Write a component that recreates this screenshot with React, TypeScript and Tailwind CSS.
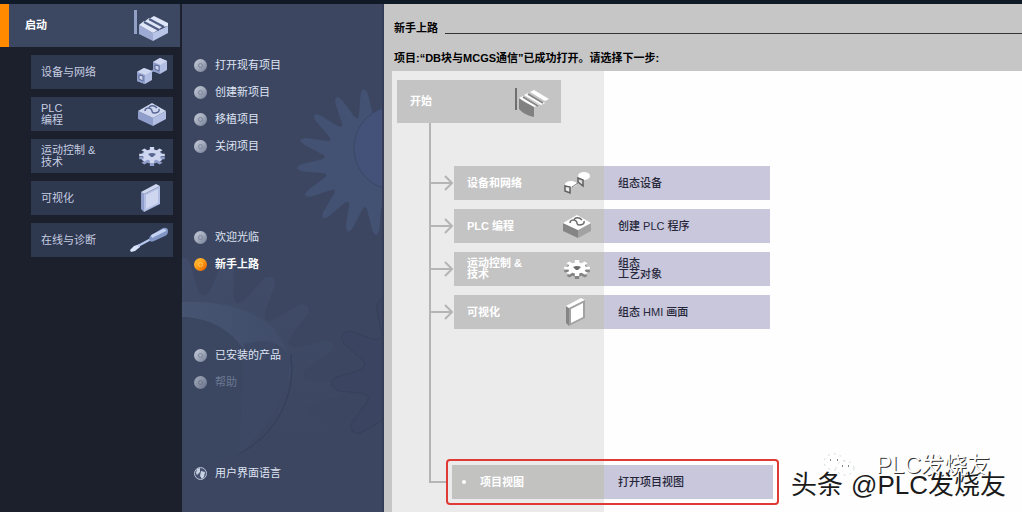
import clsx from "clsx";

function polar(cx: number, cy: number, r: number, a: number) {
  return `${(cx + r * Math.cos(a)).toFixed(1)} ${(cy + r * Math.sin(a)).toFixed(1)}`;
}

// long rounded teeth, used for the backdrop
function gearPath(cx: number, cy: number, inner: number, outer: number, teeth: number, turn: number) {
  const step = (Math.PI * 2) / teeth;
  let d = `M${polar(cx, cy, inner, turn)}`;
  for (let i = 0; i < teeth; i++) {
    const a = turn + i * step;
    d += `L${polar(cx, cy, outer - 6, a + step * 0.22)}Q${polar(cx, cy, outer + 4, a + step * 0.36)} ${polar(cx, cy, outer - 6, a + step * 0.5)}`;
    d += `L${polar(cx, cy, inner + 4, a + step * 0.68)}Q${polar(cx, cy, inner - 6, a + step * 0.84)} ${polar(cx, cy, inner + 2, a + step)}`;
  }
  return d + "Z";
}

// short square teeth, used for the small motion icon
function cogPath(inner: number, outer: number, teeth: number) {
  const step = (Math.PI * 2) / teeth;
  const points: string[] = [];
  for (let i = 0; i < teeth; i++) {
    const a = i * step;
    points.push(
      polar(0, 0, inner, a - step * 0.3),
      polar(0, 0, outer, a - step * 0.22),
      polar(0, 0, outer, a + step * 0.22),
      polar(0, 0, inner, a + step * 0.3),
    );
  }
  return `M${points.join("L")}Z`;
}

type Tone = { top: string; left: string; right: string; line: string };

const blue: Tone = { top: "#cfd7f0", left: "#8f9ecb", right: "#b1bde2", line: "#5a6894" };
const gray: Tone = { top: "#ffffff", left: "#858585", right: "#a2a2a2", line: "#6b6b6b" };

function FactoryIcon() {
  return (
    <svg width="36" height="32" viewBox="0 0 36 32">
      <path d="M1 0h3v24H1z" fill="#93a0c6" />
      <path d="M6 15 20 23v8L6 24z" fill="#9dabd4" />
      <path d="M20 23 35 16v7l-15 8z" fill="#b9c5e8" />
      <path d="M6 15 11 11 27 19 20 23z" fill="#dfe6f8" />
      <path d="M11 12 16 8 31 16 26 19z" fill="#dfe6f8" />
      <path d="M16 9 21 6 35 13v3l-4 1z" fill="#dfe6f8" />
      <path d="M11 12 26 20M16 9 31 17" stroke="#505d82" strokeWidth="2" />
    </svg>
  );
}

function StartIcon() {
  return (
    <svg width="36" height="32" viewBox="0 0 36 32">
      <path d="M1 2h2v22H1z" fill="#6f6f6f" />
      <path d="M5 12Q12 18 20 20v11Q10 29 5 23z" fill="#818181" />
      <path d="M5 12 9 10 25 19 20 21z" fill="#fff" />
      <path d="M10 9 14 7 31 17 27 19z" fill="#fff" />
      <path d="M16 6 20 4 35 13 31 15z" fill="#fff" />
      <path d="M9 11 24 20M14 8 29 17" stroke="#858585" strokeWidth="2" />
    </svg>
  );
}

function DevicesIcon() {
  return (
    <svg width="34" height="30" viewBox="0 0 34 30">
      <path d="M13 17 22 11" stroke={blue.left} strokeWidth="2" />
      <path d="M2 15 9 11 17 14v9l-7 4-8-3z" fill={blue.right} />
      <path d="M2 15 9 11 17 14 10 18z" fill={blue.top} />
      <path d="M2 15 10 18v9l-8-3z" fill={blue.left} />
      <path d="M4 18 8 19v5L4 22z" fill={blue.top} stroke={blue.line} />
      <path d="M18 5 25 1 32 4v9l-7 4-7-3z" fill={blue.right} />
      <path d="M18 5 25 1 32 4 25 8z" fill={blue.top} />
      <path d="M18 5 25 8v9l-7-3z" fill={blue.left} />
      <path d="M20 8 24 9v5l-4-2z" fill={blue.top} stroke={blue.line} />
    </svg>
  );
}

function LinkedNodesIcon() {
  return (
    <svg width="34" height="30" viewBox="0 0 34 30">
      <ellipse cx="11" cy="16" rx="6" ry="3" fill="#fff" />
      <ellipse cx="24" cy="8" rx="6" ry="4" fill="#fff" />
      <path d="M5 18 10 19v6l-5-2z" fill="#eee" stroke="#5f5f5f" strokeWidth="1.5" />
      <path d="M18 10 23 12v6l-5-4z" fill="#ddd" stroke="#5f5f5f" strokeWidth="1.5" />
      <path d="M12 19 18 15" stroke="#777" />
    </svg>
  );
}

function PlcIcon({ tone }: { tone: Tone }) {
  return (
    <svg width="34" height="30" viewBox="0 0 34 30">
      <path d="M3 12 18 19v8L3 20z" fill={tone.left} />
      <path d="M18 19 31 12v8l-13 7z" fill={tone.right} />
      <path d="M3 12 17 4 31 12 18 19z" fill={tone.top} />
      <path d="M10 12c0-3 4-4 6-2s0 4 3 4 6-1 5-4M14 8c3-2 6-1 8 1" fill="none" stroke={tone.line} strokeWidth="1.5" />
    </svg>
  );
}

function MotionIcon({ tone }: { tone: Tone }) {
  const cog = cogPath(9, 13, 8);
  return (
    <svg width="34" height="30" viewBox="0 0 34 30">
      <path d={cog} transform="translate(17 17) scale(1 0.62)" fill={tone.left} />
      <path d={cog} transform="translate(17 14) scale(1 0.62)" fill={tone.top} />
      <path d="M13 13q4-2 8 0l-3 3h-2z" fill={tone.line} />
    </svg>
  );
}

function PanelIcon({ tone }: { tone: Tone }) {
  return (
    <svg width="34" height="30" viewBox="0 0 34 30">
      <path d="M6 9 9 11v18L6 26z" fill={tone.left} />
      <path d="M6 9 21 1 25 3 9 11z" fill={tone.top} />
      <path d="M9 11 25 3v18L9 29z" fill={tone.right} />
      <path d="M11 12 23 6v14l-12 6z" fill={tone.top} />
    </svg>
  );
}

function ScrewdriverIcon() {
  return (
    <svg width="42" height="28" viewBox="0 0 42 28">
      <path d="M3 24 7 20 13 18 13 21 8 25 4 26z" fill="#d9e3fa" />
      <path d="M11 20 24 13" stroke="#b5c7ee" strokeWidth="2" />
      <path d="M23 10 36 2q5-1 5 3 0 4-3 5l-11 5q-4 2-5-2z" fill="#8296c6" />
      <path d="M24 9 36 3q4 0 3 2l-14 7z" fill="#c4d3f4" />
    </svg>
  );
}

function Bullet({ active, dim }: { active?: boolean; dim?: boolean }) {
  return (
    <span
      className={clsx(
        "flex size-[13px] shrink-0 items-center justify-center rounded-full",
        active
          ? "bg-linear-to-br from-[#ffc53a] via-[#ff9a14] to-[#df5600]"
          : "bg-linear-to-br from-[#c6cddb] via-[#a2aabb] to-[#727c94]",
        dim && "opacity-75",
      )}
    >
      <span className={clsx("size-[5px] rounded-full border", active ? "border-[#ffc65a]" : "border-[#7c869c]")} />
    </span>
  );
}

function GlobeIcon() {
  return (
    <svg width="13" height="13" viewBox="0 0 13 13" className="shrink-0">
      <circle cx="6.500" cy="6.500" r="6" fill="#47536f" stroke="#b9c4d8" />
      <path d="M3 2 6 1v4l-3 3-1-2zM7 4l4 1-1 5-2 2-2-3z" fill="#c9d2e2" />
    </svg>
  );
}

const portals = [
  { lines: ["设备与网络"], icon: <DevicesIcon /> },
  { lines: ["PLC", "编程"], icon: <PlcIcon tone={blue} /> },
  { lines: ["运动控制 &", "技术"], icon: <MotionIcon tone={blue} /> },
  { lines: ["可视化"], icon: <PanelIcon tone={blue} /> },
  { lines: ["在线与诊断"], icon: <ScrewdriverIcon /> },
];

const steps = [
  { lines: ["设备和网络"], action: ["组态设备"], icon: <LinkedNodesIcon /> },
  { lines: ["PLC 编程"], action: ["创建 PLC 程序"], icon: <PlcIcon tone={gray} /> },
  { lines: ["运动控制 &", "技术"], action: ["组态", "工艺对象"], icon: <MotionIcon tone={gray} /> },
  { lines: ["可视化"], action: ["组态 HMI 画面"], icon: <PanelIcon tone={gray} /> },
];

function Lines({ lines }: { lines: string[] }) {
  return (
    <span className="flex flex-col">
      {lines.map((line) => (
        <span key={line}>{line}</span>
      ))}
    </span>
  );
}

function Sidebar() {
  return (
    <nav className="w-[182px] shrink-0 bg-[#1c202d]">
      <button className="flex h-[43px] w-[180px] items-center border-l-[9px] border-[#ff8a00] bg-[#3c4761] pr-[11px] pl-4 text-[11px] font-bold text-white">
        <span className="flex-1 text-left">启动</span>
        <FactoryIcon />
      </button>
      <ul className="mt-2 ml-[31px] flex w-[142px] flex-col gap-2">
        {portals.map((portal) => (
          <li key={portal.lines[0]}>
            <button className="flex h-[34px] w-full items-center justify-between bg-[#2e384f] pr-1 pl-[10px] text-left text-[11px] leading-[12px] text-[#c6cde0]">
              <Lines lines={portal.lines} />
              {portal.icon}
            </button>
          </li>
        ))}
      </ul>
    </nav>
  );
}

type Task = { label: string; active?: boolean; dim?: boolean; globe?: boolean };

const taskGroups: { id: string; space: string; tasks: Task[] }[] = [
  {
    id: "project",
    space: "pt-12",
    tasks: [{ label: "打开现有项目" }, { label: "创建新项目" }, { label: "移植项目" }, { label: "关闭项目" }],
  },
  { id: "welcome", space: "pt-16", tasks: [{ label: "欢迎光临" }, { label: "新手上路", active: true }] },
  { id: "product", space: "pt-16", tasks: [{ label: "已安装的产品" }, { label: "帮助", dim: true }] },
  { id: "language", space: "pt-16", tasks: [{ label: "用户界面语言", globe: true }] },
];

function GearBackdrop() {
  return (
    <svg className="absolute inset-0 size-full" viewBox="0 0 202 508" preserveAspectRatio="xMinYMin slice">
      <defs>
        <linearGradient id="gear-fade" x1="0" y1="0" x2="0" y2="1">
          <stop offset="0" stopColor="#404c69" />
          <stop offset="0.6" stopColor="#3c4660" />
        </linearGradient>
        <linearGradient id="rim-fade" x1="0" y1="0" x2="1" y2="0">
          <stop offset="0" stopColor="#465472" />
          <stop offset="1" stopColor="#404c69" />
        </linearGradient>
      </defs>
      <path d={gearPath(16, 400, 110, 148, 20, 0.1)} fill="url(#gear-fade)" />
      <path d="M0 298Q60 296 92 324Q108 345 109 366Q104 400 57 450L40 336Q25 313 0 313z" fill="url(#rim-fade)" />
      <path d="M0 313Q40 314 62 346Q80 400 57 450L0 470z" fill="#3b4660" />
      <path d="M57 450Q104 410 109 358Q100 330 62 340z" fill="#3d4864" />
      <path d="M109 350a96 96 0 0 1-52 100" fill="none" stroke="#323d57" />
      <path d={gearPath(232, 372, 52, 84, 10, 0.3)} fill="#3b4561" stroke="#364059" />
      <path d={gearPath(188, 158, 47, 74, 16, 0.166)} fill="#435173" />
      <circle cx="214" cy="144" r="42" fill="#44527a" stroke="#3a4767" />
    </svg>
  );
}

function TaskPane() {
  return (
    <section className="relative w-[202px] shrink-0 overflow-hidden border-r-2 border-[#343d55] bg-[#3c4660]">
      <GearBackdrop />
      <div className="relative">
        {taskGroups.map((group) => (
          <ul key={group.id} className={group.space}>
            {group.tasks.map((task) => (
              <li key={task.label}>
                <button
                  className={clsx(
                    "flex h-[27px] items-center gap-2 pl-3 text-[11px]",
                    task.active && "font-bold text-white",
                    task.dim && "text-[#6c7893]",
                    !task.active && !task.dim && "text-[#dfe4f4]",
                  )}
                >
                  {task.globe ? <GlobeIcon /> : <Bullet active={task.active} dim={task.dim} />}
                  {task.label}
                </button>
              </li>
            ))}
          </ul>
        ))}
      </div>
    </section>
  );
}

function Arrow() {
  return (
    <svg width="23" height="16" viewBox="0 0 23 16" className="shrink-0" fill="none" stroke="#b5b5b5" strokeWidth="2">
      <path d="M0 8h21M14 1l7 7-7 7" />
    </svg>
  );
}

function Workflow() {
  return (
    <div className="flex flex-1 flex-col bg-[linear-gradient(to_right,#ebebeb_212px,#fefefe_212px)] pt-[9px] pb-[7px] pl-[5px]">
      <button className="flex h-[43px] w-[164px] items-center justify-between bg-[#c4c4c4] pr-[11px] pl-[13px] text-[11px] font-bold text-white">
        开始
        <StartIcon />
      </button>
      <div className="ml-8 flex-1 border-l-2 border-[#b5b5b5] pt-[43px]">
        <ul className="flex flex-col gap-[9px]">
          {steps.map((step) => (
            <li key={step.action.join("")} className="flex items-center">
              <Arrow />
              <button className="flex h-[34px] w-[316px] items-center bg-[#c9c7db] text-left text-[11px] leading-[11px]">
                <span className="flex h-full w-[150px] items-center justify-between bg-[#c4c4c4] pr-[10px] pl-[13px] font-bold text-white">
                  <Lines lines={step.lines} />
                  {step.icon}
                </span>
                <span className="pl-[14px] font-medium text-[#26263a]">
                  <Lines lines={step.action} />
                </span>
              </button>
            </li>
          ))}
        </ul>
      </div>
      <div className="ml-8 flex">
        <span className="h-6 w-[17px] border-b-2 border-l-2 border-[#b5b5b5]" />
        <div className="rounded-sm border-2 border-[#df3b34] p-1">
          <button className="flex h-[34px] w-[321px] items-center bg-[#c9c7db] text-left text-[11px]">
            <span className="flex h-full w-[152px] items-center gap-[14px] bg-[#c2c2c1] pl-[10px] font-bold text-white">
              <span className="size-1 rounded-full bg-white" />
              项目视图
            </span>
            <span className="pl-[14px] font-medium text-[#26263a]">打开项目视图</span>
          </button>
        </div>
      </div>
    </div>
  );
}

function Watermark() {
  return (
    <div className="pointer-events-none absolute right-4 bottom-[9px] whitespace-nowrap">
      <div className="absolute -top-4 right-4 flex items-center gap-5 text-[23px] leading-7 text-white [text-shadow:1px_1px_0_#333]">
        <svg width="34" height="24" viewBox="0 0 34 24" fill="#fff" stroke="#d3d9d9" strokeDasharray="2 4">
          <ellipse cx="12" cy="9" rx="10" ry="8" />
          <ellipse cx="23" cy="15" rx="9" ry="7" />
          <path d="M8 7h1M15 7h1M20 13h1M26 13h1" stroke="#7b8585" strokeWidth="2" />
        </svg>
        PLC发烧友
      </div>
      <div className="relative flex gap-2 text-[26px] leading-9 text-[#1b1b1b] [text-shadow:-1px_-1px_0_#fff]">
        <span>头条</span>
        <span>@PLC发烧友</span>
      </div>
    </div>
  );
}

export default function App() {
  return (
    <div className="relative flex min-h-screen border-t-4 border-[#101a27] bg-[#1c202d] font-['Liberation_Sans','Noto_Sans_CJK_SC',sans-serif]">
      <Sidebar />
      <TaskPane />
      <main className="flex min-w-0 flex-1 flex-col bg-[#c7c6c7] pl-2">
        <header className="flex items-center gap-[7px] pt-4 pl-[2px] text-[11px] leading-4 font-bold text-black">
          <h1>新手上路</h1>
          <span className="mt-[10px] h-px flex-1 bg-[#333]" />
        </header>
        <p className="mt-[14px] mb-[5px] pl-[2px] text-[11px] leading-4 font-bold text-black">
          项目:“DB块与MCGS通信”已成功打开。请选择下一步:
        </p>
        <Workflow />
      </main>
      <Watermark />
    </div>
  );
}
